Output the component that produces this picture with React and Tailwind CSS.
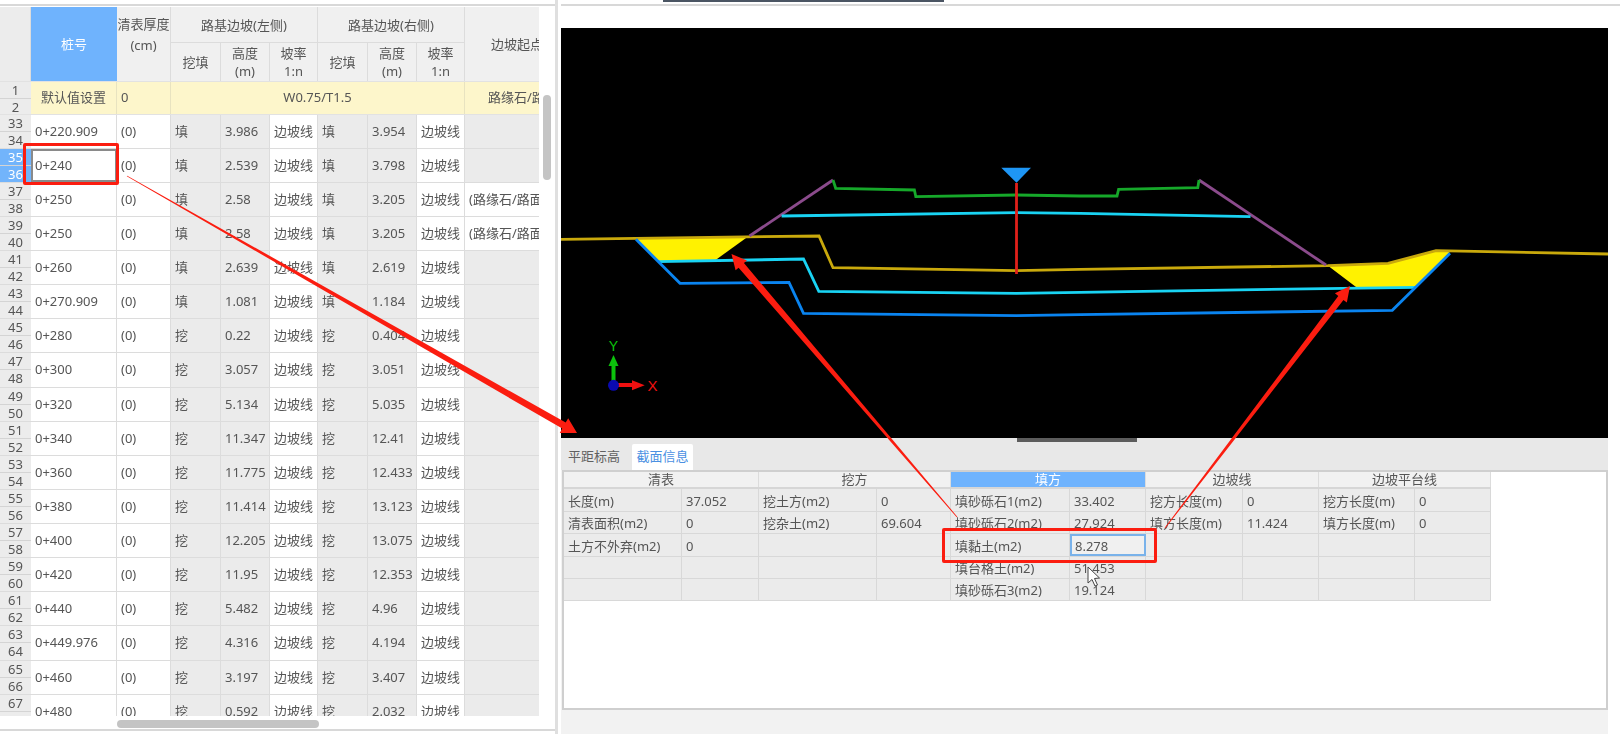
import React from 'react';

const FONT = 'font-["Noto_Sans","Noto_Sans_CJK_SC",sans-serif]';
const COLS = 'grid grid-cols-[31px_86px_54px_50px_49px_48px_50px_49px_48px_104px]';
const SECTION_COLS = 'grid grid-cols-[118px_77px_118px_74px_119px_76px_97px_76px_96px_76px]';

const PILE_ROWS = [
  ['0+220.909', '填', '3.986', '填', '3.954', ''],
  ['0+240', '填', '2.539', '填', '3.798', ''],
  ['0+250', '填', '2.58', '填', '3.205', '(路缘石/路面)'],
  ['0+250', '填', '2.58', '填', '3.205', '(路缘石/路面)'],
  ['0+260', '填', '2.639', '填', '2.619', ''],
  ['0+270.909', '填', '1.081', '填', '1.184', ''],
  ['0+280', '挖', '0.22', '挖', '0.404', ''],
  ['0+300', '挖', '3.057', '挖', '3.051', ''],
  ['0+320', '挖', '5.134', '挖', '5.035', ''],
  ['0+340', '挖', '11.347', '挖', '12.41', ''],
  ['0+360', '挖', '11.775', '挖', '12.433', ''],
  ['0+380', '挖', '11.414', '挖', '13.123', ''],
  ['0+400', '挖', '12.205', '挖', '13.075', ''],
  ['0+420', '挖', '11.95', '挖', '12.353', ''],
  ['0+440', '挖', '5.482', '挖', '4.96', ''],
  ['0+449.976', '挖', '4.316', '挖', '4.194', ''],
  ['0+460', '挖', '3.197', '挖', '3.407', ''],
  ['0+480', '挖', '0.592', '挖', '2.032', ''],
];

const SECTION_HEADS = ['清表', '挖方', '填方', '边坡线', '边坡平台线'];

const SECTION_ROWS = [
  ['长度(m)', '37.052', '挖土方(m2)', '0', '填砂砾石1(m2)', '33.402', '挖方长度(m)', '0', '挖方长度(m)', '0'],
  ['清表面积(m2)', '0', '挖杂土(m2)', '69.604', '填砂砾石2(m2)', '27.924', '填方长度(m)', '11.424', '填方长度(m)', '0'],
  ['土方不外弃(m2)', '0', '', '', '填黏土(m2)', '8.278', '', '', '', ''],
  ['', '', '', '', '填台格土(m2)', '51.453', '', '', '', ''],
  ['', '', '', '', '填砂砾石3(m2)', '19.124', '', '', '', ''],
];

const SECTION_ROW_HEIGHTS = ['h-[23px]', 'h-[22px]', 'h-[23px]', 'h-[22px]', 'h-[22px]'];

const Cell = ({ children, white, active }) => (
  <div
    className={`min-h-0 flex items-center overflow-hidden whitespace-nowrap ${
      active ? 'pl-[2px] border-2 border-[#8a8a8a]' : 'px-[4px] border-r border-[#dcdcdc]'
    } ${white ? 'bg-white' : 'bg-[#ebebeb]'}`}
  >
    {children}
  </div>
);

const RowNums = ({ a, b, active }) => (
  <div className={`min-h-0 flex flex-col text-[13px] text-center ${active ? 'bg-[#72b4fb] text-white' : 'bg-[#ececec] text-[#555]'}`}>
    <span className="h-[16px] leading-[16px] border-b border-[#d4d4d4] box-content">{a}</span>
    <span className="h-[16px] leading-[16px]">{b}</span>
  </div>
);

const PileTable = () => (
  <div className="w-[539px] h-[709px] overflow-hidden text-[13px] text-[#555]">
    {/* Header */}
    <div className={`${COLS} grid-rows-[36px_38px] w-[569px] h-[74px] bg-[#f0f0f0] text-center leading-[18px]`}>
      <div className="row-span-2 bg-[#ececec] border-r border-[#dcdcdc]" />
      <div className="row-span-2 bg-[#6fb3fd] text-white flex items-center justify-center">桩号</div>
      <div className="row-span-2 border-r border-[#dcdcdc] pt-[8px] whitespace-nowrap flex flex-col items-center">
        <span>清表厚度</span>
        <span className="mt-[3px]">(cm)</span>
      </div>
      <div className="col-span-3 flex items-center justify-center border-r border-b border-[#dcdcdc]">路基边坡(左侧)</div>
      <div className="col-span-3 flex items-center justify-center border-r border-b border-[#dcdcdc]">路基边坡(右侧)</div>
      <div className="row-span-2 flex items-center justify-center whitespace-nowrap">边坡起点</div>
      {['挖填', '高度|(m)', '坡率|1:n', '挖填', '高度|(m)', '坡率|1:n'].map((h, i) => (
        <div key={i} className="flex flex-col items-center justify-center border-r border-[#dcdcdc]">
          {h.split('|').map((t) => <span key={t}>{t}</span>)}
        </div>
      ))}
    </div>

    {/* Default row */}
    <div className={`${COLS} grid-rows-[32px] w-[569px] h-[34px] bg-[#fdf6cb] border-y border-[#e2e2e2]`}>
      <RowNums a="1" b="2" />
      <div className="flex items-center justify-center border-r border-[#e8e3c0]">默认值设置</div>
      <div className="flex items-center px-[4px] border-r border-[#e8e3c0]">0</div>
      <div className="col-span-6 flex items-center justify-center border-r border-[#e8e3c0]">W0.75/T1.5</div>
      <div className="flex items-center pl-[23px] whitespace-nowrap">路缘石/路面</div>
    </div>

    {/* Data rows, 34px with one spare pixel every 8 rows */}
    {PILE_ROWS.map((r, i) => {
      const active = r[0] === '0+240';
      return (
        <div key={i} className={`${COLS} w-[569px] border-b border-[#dcdcdc] ${i % 8 === 7 ? 'h-[35px]' : 'h-[34px]'}`}>
          <RowNums a={33 + i * 2} b={34 + i * 2} active={active} />
          <Cell white active={active}>{r[0]}</Cell>
          <Cell white>(0)</Cell>
          <Cell>{r[1]}</Cell>
          <Cell>{r[2]}</Cell>
          <Cell white>边坡线</Cell>
          <Cell>{r[3]}</Cell>
          <Cell>{r[4]}</Cell>
          <Cell white>边坡线</Cell>
          <Cell white={r[5] !== ''}>{r[5]}</Cell>
        </div>
      );
    })}
  </div>
);

const SectionTable = () => (
  <div className="w-[927px] text-[13px] text-[#555]">
    <div className="flex h-[17px] leading-[15px] text-center border-b-2 border-[#d6d6d6]">
      {SECTION_HEADS.map((h, i) => (
        <div
          key={h}
          className={`border-r border-[#dcdcdc] ${['w-[195px]', 'w-[192px]', 'w-[195px]', 'w-[173px]', 'w-[172px]'][i]} ${i === 2 ? 'bg-[#6fb3fd] text-white' : 'bg-[#f1f1f1]'}`}
        >
          {h}
        </div>
      ))}
    </div>
    {SECTION_ROWS.map((r, i) => (
      <div key={i} className={`${SECTION_COLS} ${SECTION_ROW_HEIGHTS[i]} border-b border-[#d8d8d8] leading-[15px]`}>
        {r.map((v, j) => {
          const picked = v === '8.278';
          return (
            <div
              key={j}
              className={`min-h-0 flex items-center whitespace-nowrap pt-[2px] ${picked ? 'pl-[3px] border-2 border-[#79b2ea] bg-[#f0f0f0]' : 'px-[4px] border-r border-[#d8d8d8] bg-[#ebebeb]'}`}
            >
              {v}
            </div>
          );
        })}
      </div>
    ))}
  </div>
);

const SectionDrawing = () => (
  <svg viewBox="561 28 1047 410" className="block w-full h-full" fill="none" strokeWidth="2.8">
    <polygon points="636,238.3 747.8,236.7 715.6,260 658,261.7" fill="#fff200" />
    <polygon points="1328,265.7 1388,263.3 1436,250.7 1450,251.7 1415.7,287.3 1357,287.7" fill="#fff200" />
    <polyline stroke="#c9a90c" points="561,239.3 636,238.3 819,236 833,267.7 1016.5,270.7 1080,269.3 1328,265.7 1388,263.3 1436,250.7 1608.6,254" />
    <polyline stroke="#8b4b8c" points="749.5,236 833,180" />
    <polyline stroke="#8b4b8c" points="1199,180 1326,265" />
    <polyline stroke="#16a82a" points="833,180 835.7,188.3 914.4,190 915.8,196.7 1016.5,195 1080,196 1117,196 1118.6,189.3 1197.8,187.7 1199,180" />
    <polyline stroke="#19d3f3" points="781.6,216 1016.5,212.7 1080,213.3 1250.5,216.7" />
    <polyline stroke="#19d3f3" points="658,261.7 803.5,259 818.8,291.3 1016.5,293.3 1080,292.3 1415.7,287.3" />
    <polyline stroke="#0a84f0" points="636,239.3 680,283.3 789,282.3 803.5,313.3 1016.5,315.7 1080,314.7 1392.3,310.3 1450,253.3" />
    <polygon points="1001.3,167.7 1031,167.7 1016.5,182.7" fill="#1e96f5" />
    <line x1="1016.5" y1="183" x2="1016.5" y2="274" stroke="#e0201a" />
    {/* Axis marker */}
    <line x1="613.5" y1="385" x2="613.5" y2="364" stroke="#0cc20c" strokeWidth="4" />
    <polygon points="613.5,355 608.5,366 618.5,366" fill="#0cc20c" />
    <line x1="613.5" y1="385" x2="634" y2="385" stroke="#f01010" strokeWidth="4" />
    <polygon points="644.7,385.3 632,380.3 632,390.3" fill="#f01010" />
    <circle cx="613.5" cy="385.3" r="5.5" fill="#0a0ab0" />
    <text x="613.5" y="351" textAnchor="middle" fontSize="14" fill="#0cc20c" fontFamily="Liberation Sans, sans-serif">Y</text>
    <text x="652.5" y="391" textAnchor="middle" fontSize="15" fill="#f01010" fontFamily="Liberation Sans, sans-serif">X</text>
  </svg>
);

// tapered annotation arrow, thin at the start and wide at the head
const arrowPoints = ([x1, y1], [x2, y2], startW, endW, headLen, headW) => {
  const len = Math.hypot(x2 - x1, y2 - y1);
  const ux = (x2 - x1) / len;
  const uy = (y2 - y1) / len;
  const px = -uy;
  const py = ux;
  const bx = x2 - ux * headLen;
  const by = y2 - uy * headLen;
  const pts = [
    [x1 + px * startW / 2, y1 + py * startW / 2],
    [bx + px * endW / 2, by + py * endW / 2],
    [bx + px * headW / 2, by + py * headW / 2],
    [x2, y2],
    [bx - px * headW / 2, by - py * headW / 2],
    [bx - px * endW / 2, by - py * endW / 2],
    [x1 - px * startW / 2, y1 - py * startW / 2],
  ];
  return pts.map((p) => p.join(',')).join(' ');
};

const Annotations = () => (
  <>
    <svg viewBox="0 0 1620 734" className="absolute inset-0 w-[1620px] h-[734px] pointer-events-none">
      <polygon fill="#fb1d10" points={arrowPoints([127, 176], [577, 433], 0.8, 7, 15, 17)} />
      <polygon fill="#fb1d10" points={arrowPoints([957, 517], [731.5, 254], 0.8, 7, 15, 15)} />
      <polygon fill="#fb1d10" points={arrowPoints([1165, 528], [1350, 286], 0.8, 6.5, 15, 15)} />
      {/* Mouse pointer */}
      <path d="M1088 567 L1088 583 L1092 579.5 L1095 586 L1097.5 585 L1094.5 578.5 L1099.5 578 Z" fill="#fff" stroke="#444" strokeWidth="1" />
    </svg>
    <div className="absolute left-[23px] top-[143px] w-[96px] h-[42px] border-[3px] border-[#fb1d10] rounded-[2px]" />
    <div className="absolute left-[942px] top-[528px] w-[215px] h-[35px] border-[3px] border-[#fb1d10] rounded-[2px]" />
  </>
);

const App = () => (
  <div className={`relative flex w-[1620px] h-[734px] overflow-hidden bg-white ${FONT}`}>
    {/* Left table panel */}
    <div className="relative w-[555px] h-[731px] shrink-0 border-b-2 border-[#d8d8d8]">
      <div className="h-[7px] pt-[4px]"><div className="h-[2px] bg-[#d8d8d8]" /></div>
      <div className="blur-[0.3px]"><PileTable /></div>
      <div className="absolute left-[543px] top-[95px] w-[8px] h-[85px] rounded-full bg-[#c4c4c4]" />
      <div className="absolute left-[117px] top-[720px] w-[202px] h-[8px] rounded-full bg-[#c4c4c4]" />
    </div>
    <div className="w-[3px] h-full bg-[#dfdfdf] shrink-0" />
    <div className="w-[3px] h-full bg-white shrink-0" />

    {/* Right panel */}
    <div className="flex-1 flex flex-col">
      <div className="h-[28px] bg-white">
        <div className="ml-[102px] w-[281px] h-[2px] bg-[#4b5563]" />
        <div className="mt-[2px] h-[2px] bg-[#d8d8d8]" />
      </div>
      <div className="w-[1047px] h-[410px] bg-black"><SectionDrawing /></div>
      <div className="relative w-[1047px] flex-1 bg-[#f2f2f2]">
        <div className="absolute left-[456px] top-0 w-[120px] h-[4px] bg-[#5c5c5c]" />
        <div className="flex h-[32px] pt-[6px] text-[13px] items-stretch bg-[#e8e8e8]">
          <div className="w-[71px] flex items-center pl-[7px] text-[#606060]">平距标高</div>
          <div className="w-[61px] flex items-center justify-center bg-white text-[#4a90e2] rounded-t-[2px]">截面信息</div>
        </div>
        <div className="h-[240px] ml-[1px] border-2 border-[#cfcfcf] bg-white blur-[0.3px]">
          <SectionTable />
        </div>
      </div>
    </div>

    <Annotations />
  </div>
);

export default App;
